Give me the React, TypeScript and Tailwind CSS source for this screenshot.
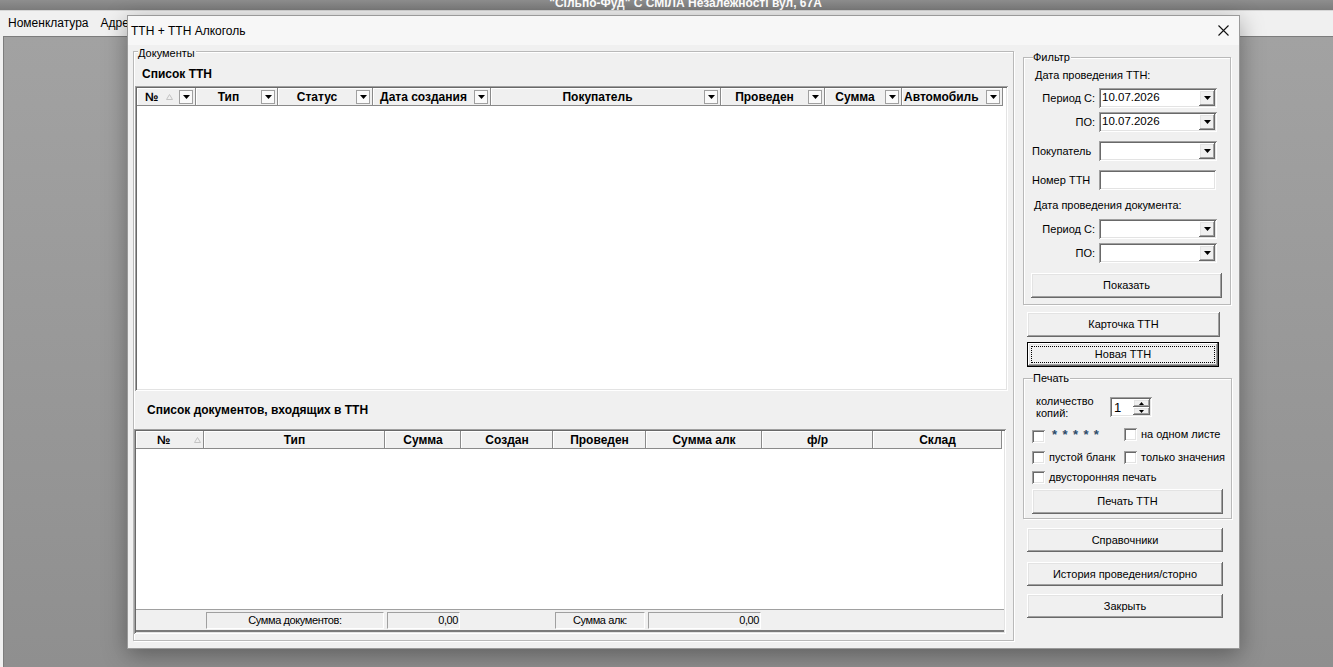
import React from "react";

// classic 3D edges
const raised =
  "shadow-[inset_-1px_-1px_#696969,inset_1px_1px_#ffffff,inset_-2px_-2px_#a0a0a0,inset_2px_2px_#e3e3e3]";
const sunken =
  "shadow-[inset_1px_1px_#a0a0a0,inset_-1px_-1px_#ffffff,inset_2px_2px_#696969,inset_-2px_-2px_#e3e3e3]";
const headEdge = "shadow-[inset_-1px_-1px_#8a8a8a,inset_1px_1px_#ffffff]";

const Arrow = () => (
  <svg width="7" height="4" viewBox="0 0 7 4">
    <path d="M0 0h7L3.5 4z" fill="#000" />
  </svg>
);

const SortMark = () => (
  <svg width="7" height="6" viewBox="0 0 7 6">
    <path d="M3.5 0.5L6.5 5.5H0.5z" fill="none" stroke="#c4c4c4" strokeWidth="1" />
  </svg>
);

const Btn = ({ children, className = "" }: { children: React.ReactNode; className?: string }) => (
  <div className={`flex items-center justify-center whitespace-nowrap bg-[#f0f0f0] ${raised} ${className}`}>{children}</div>
);

const Combo = ({ value = "" }: { value?: string }) => (
  <div className={`w-[118px] h-[20px] bg-white ${sunken} flex items-center`}>
    <span className="flex-1 pl-[3px] text-[11.5px] leading-none">{value}</span>
    <div className={`w-[16px] h-[16px] mr-[2px] bg-[#f0f0f0] ${raised} flex items-center justify-center`}>
      <Arrow />
    </div>
  </div>
);

const Check = ({ className = "" }: { className?: string }) => (
  <div className={`w-[13px] h-[13px] shrink-0 bg-white ${sunken} ${className}`} />
);

const GroupBox = ({
  title,
  className,
  legendClass,
  children,
}: {
  title: string;
  className: string;
  legendClass: string;
  children: React.ReactNode;
}) => (
  <div className={`relative border border-[#b9b9b9] shadow-[1px_1px_0_#ffffff,inset_1px_1px_0_#ffffff] ${className}`}>
    <span className={`absolute -top-[8px] bg-[#f0f0f0] leading-[14px] pr-[1px] ${legendClass}`}>{title}</span>
    {children}
  </div>
);

type Col = { title: string; w: string; drop?: boolean; sort?: boolean; titleClass?: string };

const ttnCols: Col[] = [
  { title: "№", w: "w-[59px]", drop: true, sort: true, titleClass: "pl-[8px] pr-[8px]" },
  { title: "Тип", w: "w-[82px]", drop: true },
  { title: "Статус", w: "w-[95px]", drop: true },
  { title: "Дата создания", w: "w-[118px]", drop: true },
  { title: "Покупатель", w: "w-[230px]", drop: true },
  { title: "Проведен", w: "w-[104px]", drop: true },
  { title: "Сумма", w: "w-[77px]", drop: true },
  { title: "Автомобиль", w: "w-[101px]", drop: true, titleClass: "pl-[2px]" },
];

const docCols: Col[] = [
  { title: "№", w: "w-[68px]", sort: true, titleClass: "pl-[21px] pr-[24px]" },
  { title: "Тип", w: "w-[181px]" },
  { title: "Сумма", w: "w-[76px]" },
  { title: "Создан", w: "w-[92px]" },
  { title: "Проведен", w: "w-[93px]" },
  { title: "Сумма алк", w: "w-[116px]" },
  { title: "ф/р", w: "w-[111px]" },
  { title: "Склад", w: "w-[129px]" },
];

const HeadCell = ({ c }: { c: Col }) => (
  <div className={`${c.w} h-full shrink-0 flex items-center bg-[#f0f0f0] text-[12px] ${headEdge}`}>
    {c.sort ? (
      <>
        <span className={`font-bold ${c.titleClass}`}>{c.title}</span>
        <SortMark />
        <span className="flex-1" />
      </>
    ) : (
      <span className={`flex-1 font-bold whitespace-nowrap ${c.titleClass ?? "text-center"}`}>{c.title}</span>
    )}
    {c.drop && (
      <div className="w-[14px] h-[14px] mr-[3px] shrink-0 border border-[#a0a0a0] bg-[#fafafa] flex items-center justify-center">
        <Arrow />
      </div>
    )}
  </div>
);

const FooterCell = ({ w, children, right }: { w: string; children: React.ReactNode; right?: boolean }) => (
  <div
    className={`${w} h-[17px] shrink-0 flex items-center border-t border-l border-[#a0a0a0] border-b border-b-white border-r border-r-white text-[11px] tracking-[-0.4px] ${
      right ? "justify-end pr-[1px]" : "justify-center"
    }`}
  >
    {children}
  </div>
);

const Dialog = () => (
  <div className="absolute left-[127px] top-[15px] w-[1113px] h-[634px] bg-[#f0f0f0] border border-[#9a9a9a] shadow-[0_6px_22px_rgba(0,0,0,0.35)] flex flex-col text-[11px]">
    {/* caption */}
    <div className="h-[29px] shrink-0 bg-[#f7f7f7] flex items-center justify-between pl-[3px] pr-[10px] text-[12px]">
      <span>ТТН + ТТН Алкоголь</span>
      <svg width="11" height="11" viewBox="0 0 11 11">
        <path d="M0.5 0.5l10 10M10.5 0.5l-10 10" stroke="#111" strokeWidth="1.1" />
      </svg>
    </div>

    <div className="flex pl-[5px] pt-[6px]">
      {/* documents */}
      <GroupBox title="Документы" className="w-[881px] h-[590px] flex flex-col" legendClass="left-[4px] top-[-6px]">
        <div className="mt-[15px] h-[14px] pl-[8px] font-bold text-[12px] leading-[14px]">Список ТТН</div>
        <div className={`mt-[5px] ml-[1px] w-[873px] h-[305px] bg-white ${sunken} p-[2px] flex flex-col`}>
          <div className="h-[18px] flex bg-white">
            {ttnCols.map((c) => (
              <HeadCell key={c.title} c={c} />
            ))}
          </div>
          <div className="flex-1" />
        </div>

        <div className="mt-[12px] h-[14px] pl-[13px] font-bold text-[12px] leading-[14px]">
          Список документов, входящих в ТТН
        </div>
        <div className={`mt-[12px] w-[872px] h-[205px] bg-white ${sunken} p-[2px] flex flex-col`}>
          <div className="h-[18px] flex bg-white">
            {docCols.map((c) => (
              <HeadCell key={c.title} c={c} />
            ))}
          </div>
          <div className="flex-1" />
          <div className="h-[23px] shrink-0 bg-[#f0f0f0] border-t border-[#a0a0a0] border-b-2 border-b-[#7a7a7a] flex items-center pl-[70px]">
            <FooterCell w="w-[178px]">Сумма документов:</FooterCell>
            <FooterCell w="w-[73px] ml-[3px]" right>
              0,00
            </FooterCell>
            <FooterCell w="w-[90px] ml-[95px]">Сумма алк:</FooterCell>
            <FooterCell w="w-[113px] ml-[3px]" right>
              0,00
            </FooterCell>
          </div>
        </div>
      </GroupBox>

      {/* right side */}
      <div className="ml-[8px] w-[212px] flex flex-col">
        <GroupBox title="Фильтр" className="mt-[6px] ml-[1px] w-[208px] h-[248px] flex flex-col" legendClass="left-[9px]">
          <div className="mt-[10px] h-[14px] pl-[11px] leading-[14px]">Дата проведения ТТН:</div>
          <div className="mt-[6px] flex items-center">
            <span className="w-[71px] text-right">Период С:</span>
            <div className="ml-[4px]">
              <Combo value="10.07.2026" />
            </div>
          </div>
          <div className="mt-[4px] flex items-center">
            <span className="w-[71px] text-right">ПО:</span>
            <div className="ml-[4px]">
              <Combo value="10.07.2026" />
            </div>
          </div>
          <div className="mt-[9px] flex items-center">
            <span className="w-[75px] pl-[8px]">Покупатель</span>
            <Combo />
          </div>
          <div className="mt-[9px] flex items-center">
            <span className="w-[75px] pl-[8px]">Номер ТТН</span>
            <div className={`w-[117px] h-[20px] bg-white ${sunken}`} />
          </div>
          <div className="mt-[8px] h-[14px] pl-[10px] leading-[14px]">Дата проведения документа:</div>
          <div className="mt-[7px] flex items-center">
            <span className="w-[71px] text-right">Период С:</span>
            <div className="ml-[4px]">
              <Combo />
            </div>
          </div>
          <div className="mt-[4px] flex items-center">
            <span className="w-[71px] text-right">ПО:</span>
            <div className="ml-[4px]">
              <Combo />
            </div>
          </div>
          <Btn className="mt-[10px] ml-[7px] w-[191px] h-[25px]">Показать</Btn>
        </GroupBox>

        <Btn className="mt-[7px] ml-[5px] w-[193px] h-[25px]">Карточка ТТН</Btn>
        <div className="mt-[5px] ml-[5px] w-[192px] h-[25px] border border-black">
          <Btn className="relative w-full h-full">
            <div className="absolute inset-[3px] border border-dotted border-black" />
            Новая ТТН
          </Btn>
        </div>

        <GroupBox title="Печать" className="mt-[11px] ml-[1px] w-[209px] h-[141px] flex flex-col" legendClass="left-[9px]">
          <div className="mt-[16px] h-[24px] flex items-center pl-[12px]">
            <span className="w-[74px] leading-[12px]">
              количество
              <br />
              копий:
            </span>
            <div className={`w-[42px] h-[20px] bg-white ${sunken} flex items-center pl-[4px]`}>
              <span className="flex-1 text-[13px] leading-none">1</span>
              <div className="mr-[2px] flex flex-col">
                <div className={`w-[17px] h-[8px] bg-[#f0f0f0] ${raised} flex items-center justify-center`}>
                  <svg width="5" height="3" viewBox="0 0 5 3">
                    <path d="M0 3h5L2.5 0z" fill="#000" />
                  </svg>
                </div>
                <div className={`w-[17px] h-[8px] bg-[#f0f0f0] ${raised} flex items-center justify-center`}>
                  <svg width="5" height="3" viewBox="0 0 5 3">
                    <path d="M0 0h5L2.5 3z" fill="#000" />
                  </svg>
                </div>
              </div>
            </div>
          </div>
          <div className="mt-[9px] flex items-start pl-[8px] whitespace-nowrap">
            <div className="w-[92px] flex items-start">
              <Check className="mt-[2px]" />
              <span className="ml-[7px] font-bold text-[13px] leading-[13px] tracking-[5.4px] text-[#2d4b69]">*****</span>
            </div>
            <Check />
            <span className="ml-[4px] leading-[13px]">на одном листе</span>
          </div>
          <div className="mt-[8px] flex items-center pl-[8px] whitespace-nowrap">
            <div className="w-[92px] flex items-center">
              <Check />
              <span className="ml-[4px] leading-[13px]">пустой бланк</span>
            </div>
            <Check />
            <span className="ml-[4px] leading-[13px]">только значения</span>
          </div>
          <div className="mt-[7px] flex items-center pl-[8px] whitespace-nowrap">
            <Check />
            <span className="ml-[4px] leading-[13px]">двусторонняя печать</span>
          </div>
          <Btn className="mt-[5px] ml-[8px] w-[191px] h-[25px]">Печать ТТН</Btn>
        </GroupBox>

        <Btn className="mt-[9px] ml-[5px] w-[196px] h-[24px]">Справочники</Btn>
        <Btn className="mt-[10px] ml-[5px] w-[196px] h-[24px]">История проведения/сторно</Btn>
        <Btn className="mt-[8px] ml-[5px] w-[196px] h-[24px]">Закрыть</Btn>
      </div>
    </div>
  </div>
);

export default function App() {
  return (
    <div className="relative w-[1333px] h-[667px] overflow-hidden bg-[#f0f0f0] font-['Liberation_Sans',Arial,sans-serif] text-[12px] text-black">
      <div className="h-[10px] overflow-hidden flex justify-center pl-[38px] bg-gradient-to-b from-[#8e8e8e] to-[#7b7b7b]">
        <span className="-mt-[3px] text-[12px] leading-[13px] font-bold text-white whitespace-nowrap">
          "Сільпо-Фуд" С СМІЛА Незалежності вул, 67А
        </span>
      </div>
      <div className="h-[1px] bg-[#d6d6d6]" />
      <div className="h-[24px] flex items-center gap-[12px] pl-[8px] bg-[#f0f0f0]">
        <span>Номенклатура</span>
        <span>Адреса</span>
      </div>
      <div className="h-[632px] pl-[3px] pt-[1px] bg-[#f0f0f0]">
        <div className="h-full border-t border-l border-[#7d7d7d] bg-gradient-to-b from-[#a2a2a2] to-[#8f8f8f]" />
      </div>
      <Dialog />
    </div>
  );
}
